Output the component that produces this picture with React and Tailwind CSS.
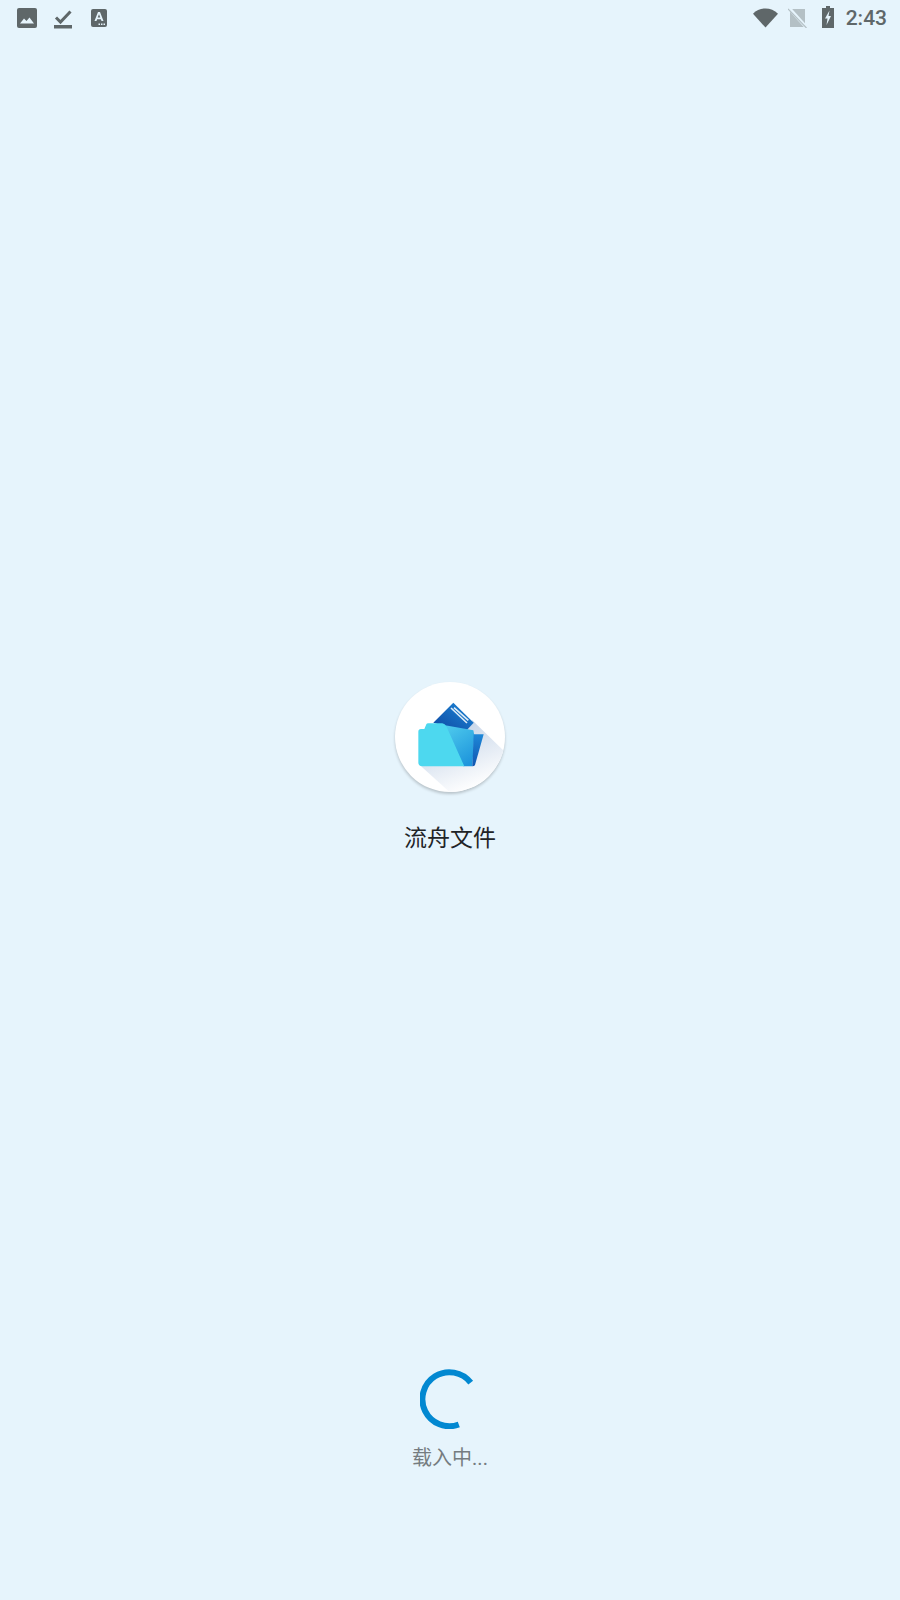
const CJK = '[font-family:"Noto_Sans_CJK_SC","Noto_Sans",sans-serif]'

function StatusBar() {
  return (
    <div className="flex items-center justify-between h-[36px] pl-[17px] pr-[13px] shrink-0">
      <div className="flex items-center">
        <svg width="20" height="20" viewBox="0 0 20 20" className="mr-[16px]">
          <rect width="20" height="20" rx="2" fill="#5f6769" />
          <path d="M3 15.5 L7 10.5 L9.5 13 L12.5 9.5 L17 15.5 Z" fill="#e6f4fc" />
        </svg>
        <svg width="20" height="22" viewBox="0 0 20 22" className="mr-[18px]">
          <path d="M3 10.5 L7.5 15 L17.5 4.5" fill="none" stroke="#5f6769" strokeWidth="3" />
          <rect x="1" y="18" width="18" height="3.5" fill="#5f6769" />
        </svg>
        <svg width="16" height="18" viewBox="0 0 16 18">
          <rect width="16" height="18" rx="2" fill="#5f6769" />
          <path d="M3.5 12 L7 3 H9 L12.5 12 H10.5 L9.9 10.2 H6.1 L5.5 12 Z M6.7 8.6 H9.3 L8 5.2 Z" fill="#e6f4fc" fillRule="evenodd" />
          <path d="M7.5 14.5 H9 V16 H7.5 Z M10 14.5 H11.5 V16 H10 Z M12.5 14.5 H14 V16 H12.5 Z" fill="#e6f4fc" />
        </svg>
      </div>
      <div className="flex items-center">
        <svg width="25" height="20" viewBox="0 0 26 20" className="mr-[10px]">
          <path d="M0 5.5 C7 -1.8 19 -1.8 26 5.5 L13 20 Z" fill="#5f6769" />
        </svg>
        <svg width="19" height="20" viewBox="0 0 19 20" className="mr-[15px]">
          <path d="M2 1 H17 V19 H2 Z" fill="#b4c0c5" />
          <path d="M0 -1 L19 20" stroke="#e6f4fc" strokeWidth="3.5" />
          <path d="M0 1 L18.5 20" stroke="#b4c0c5" strokeWidth="1.2" />
        </svg>
        <svg width="12" height="22" viewBox="0 0 12 22" className="mr-[12px] mb-[2px]">
          <path d="M4 0 H8 V2 H12 V22 H0 V2 H4 Z" fill="#5f6769" />
          <path d="M7.5 4.5 L3 12.5 H5.5 L4.5 19 L9 10 H6.5 Z" fill="#e6f4fc" />
        </svg>
        <span className='text-[21px] leading-[24px] font-medium text-[#5f6769] [font-family:"Roboto",sans-serif]'>2:43</span>
      </div>
    </div>
  )
}

function Logo() {
  return (
    <div className="w-[110px] h-[110px] rounded-full bg-white shadow-[0_2px_3px_rgba(0,0,0,0.2)] overflow-hidden">
      <svg width="110" height="110" viewBox="30 35 330 330">
        <defs>
          <linearGradient id="shade" x1="0.25" y1="0.15" x2="0.6" y2="0.9">
            <stop offset="0" stopColor="#c6d5e8" />
            <stop offset="1" stopColor="#ffffff" />
          </linearGradient>
          <linearGradient id="card" x1="0" y1="1" x2="1" y2="0">
            <stop offset="0" stopColor="#0d47a1" />
            <stop offset="1" stopColor="#1e88d8" />
          </linearGradient>
          <linearGradient id="inner" x1="0.2" y1="0" x2="0.7" y2="1">
            <stop offset="0" stopColor="#4cc8ec" />
            <stop offset="1" stopColor="#1e95dc" />
          </linearGradient>
          <linearGradient id="side" x1="0" y1="0" x2="0" y2="1">
            <stop offset="0" stopColor="#1e88d8" />
            <stop offset="1" stopColor="#1155b0" />
          </linearGradient>
        </defs>
        <path d="M262 150 L370 255 L370 380 L210 380 L100 280 Z" fill="url(#shade)" />
        <path d="M205 97 L266 157 L240 185 L145 157 Z" fill="url(#card)" />
        <path d="M198 113 L246 158 M207 112 L250 150" stroke="#dcecf8" strokeWidth="5" fill="none" />
        <path d="M180 165 L265 180 L268 195 L262 288 L235 288 Z" fill="url(#inner)" />
        <path d="M266 192 L296 192 L270 284 Q268 288 262 288 Z" fill="url(#side)" />
        <path d="M100 184 Q100 176 108 176 L118 176 L124 162 Q125 159 130 159 L172 159 Q180 160 184 168 L238 288 L112 288 Q100 288 100 276 Z" fill="#4dd8ef" />
      </svg>
    </div>
  )
}

function Spinner() {
  return (
    <svg width="60" height="60" viewBox="0 0 60 60">
      <path d="M50.7 13.6 A27 27 0 1 0 38.8 55.5" fill="none" stroke="#0288d1" strokeWidth="6" />
    </svg>
  )
}

export default function App() {
  return (
    <div className={`w-[900px] h-[1600px] bg-[#e6f4fc] flex flex-col ${CJK}`}>
      <StatusBar />
      <div className="flex flex-col items-center pt-[646px]">
        <Logo />
        <p className="mt-[27px] text-[23px] leading-[34px] text-[#1f2427]">流舟文件</p>
      </div>
      <div className="flex flex-col items-center pt-[516px]">
        <Spinner />
        <p className="mt-[13px] text-[20px] leading-[30px] text-[#757c80]">载入中<span className='[font-family:"Roboto",sans-serif]'>...</span></p>
      </div>
    </div>
  )
}
